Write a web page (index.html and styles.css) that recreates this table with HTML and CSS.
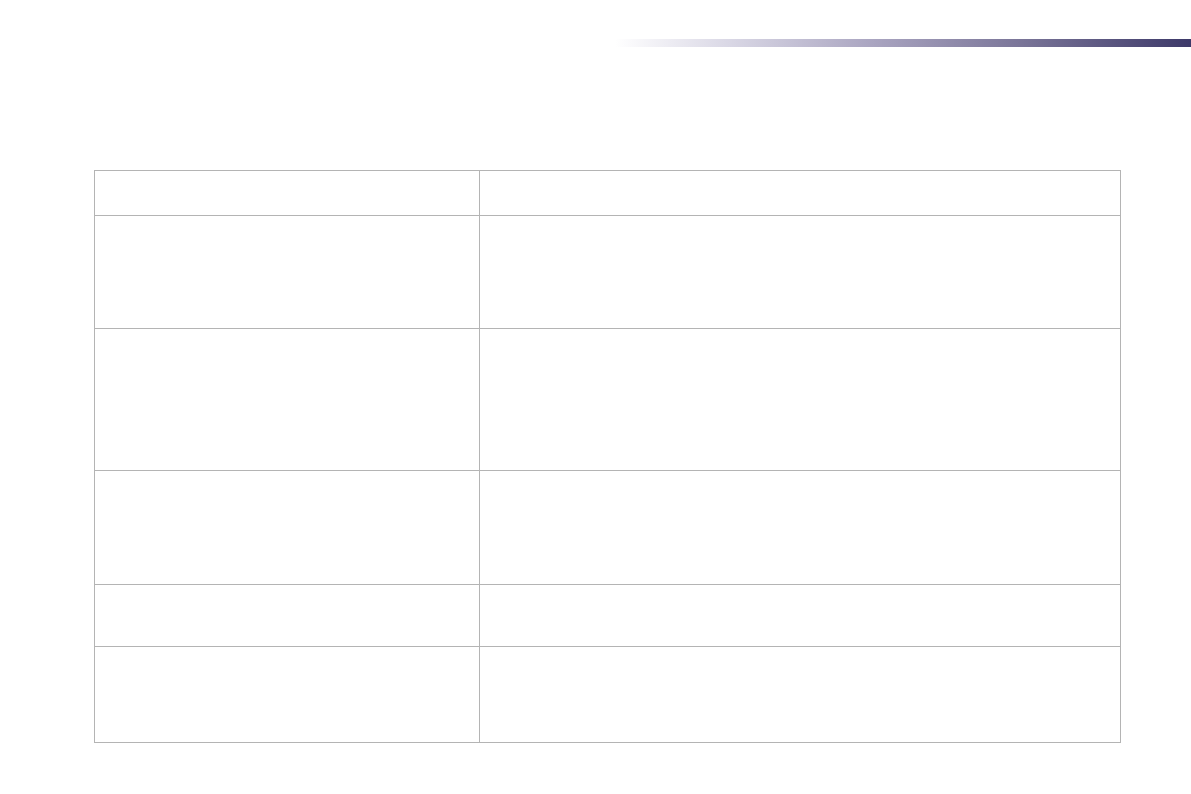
FILE: index.html
```html
<!DOCTYPE html>
<html>
<head>
<meta charset="utf-8">
<link rel="stylesheet" href="styles.css">
</head>
<body>
<header class="top">
  <div class="bar"></div>
</header>
<main class="content">
  <div class="grid">
    <div class="cell c1 r1"></div><div class="cell c2 r1"></div>
    <div class="cell c1 r2"></div><div class="cell c2 r2"></div>
    <div class="cell c1 r3"></div><div class="cell c2 r3"></div>
    <div class="cell c1 r4"></div><div class="cell c2 r4"></div>
    <div class="cell c1 r5"></div><div class="cell c2 r5"></div>
    <div class="cell c1 r6"></div><div class="cell c2 r6"></div>
  </div>
</main>
</body>
</html>
```
FILE: styles.css
```css
html, body {
  margin: 0;
  padding: 0;
  background: #ffffff;
  font-family: "Liberation Sans", Arial, sans-serif;
}
.top {
  padding-top: 39px;
  height: 8px;
}
.bar {
  margin-left: 615px;
  height: 8px;
  background: linear-gradient(to right, #ffffff 0%, #d9d7e5 20%, #a9a4c0 45%, #7b7699 70%, #3d3969 100%);
}
.content {
  padding-top: 123px;
  padding-left: 94px;
}
.grid {
  display: grid;
  grid-template-columns: 385px 641px;
  grid-template-rows: 45px 113px 142px 114px 62px 96px;
  width: 1026px;
  border-top: 1px solid #b4b4b4;
  border-left: 1px solid #b4b4b4;
}
.cell {
  box-sizing: border-box;
  border-right: 1px solid #b4b4b4;
  border-bottom: 1px solid #b4b4b4;
}
```
